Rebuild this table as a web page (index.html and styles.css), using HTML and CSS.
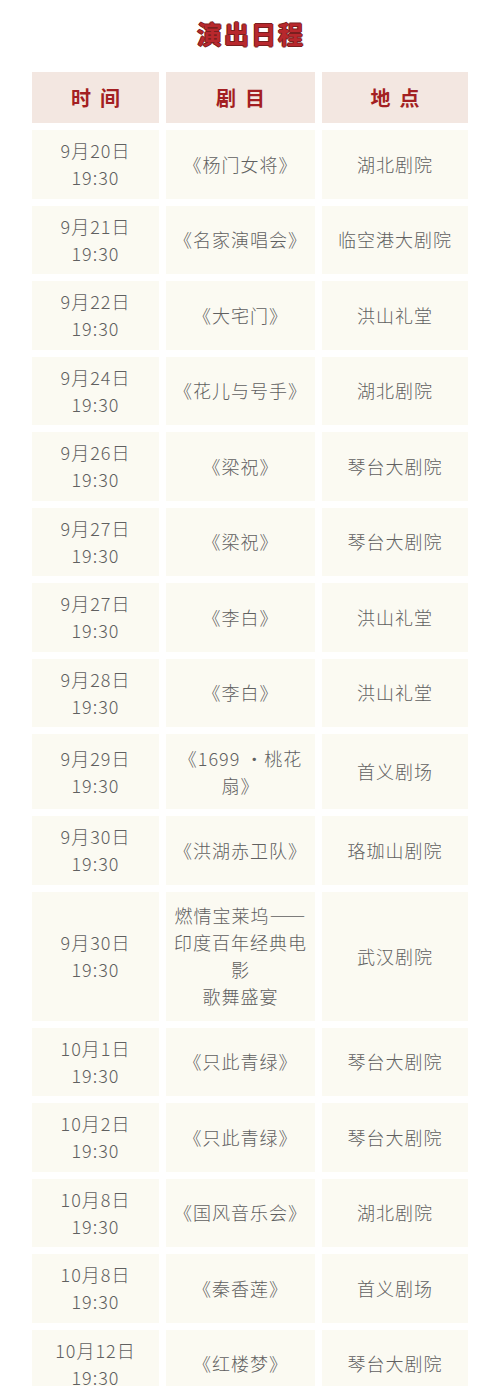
FILE: index.html
```html
<!DOCTYPE html>
<html lang="zh">
<head>
<meta charset="utf-8">
<title>演出日程</title>
<link rel="stylesheet" href="styles.css">
</head>
<body>
<h1 class="title">演出日程</h1>
<div class="schedule">
  <div class="head">时间</div>
  <div class="head">剧目</div>
  <div class="head">地点</div>

  <div class="cell">9月20日<br>19:30</div><div class="cell">《杨门女将》</div><div class="cell">湖北剧院</div>
  <div class="cell">9月21日<br>19:30</div><div class="cell">《名家演唱会》</div><div class="cell">临空港大剧院</div>
  <div class="cell">9月22日<br>19:30</div><div class="cell">《大宅门》</div><div class="cell">洪山礼堂</div>
  <div class="cell">9月24日<br>19:30</div><div class="cell">《花儿与号手》</div><div class="cell">湖北剧院</div>
  <div class="cell">9月26日<br>19:30</div><div class="cell">《梁祝》</div><div class="cell">琴台大剧院</div>
  <div class="cell">9月27日<br>19:30</div><div class="cell">《梁祝》</div><div class="cell">琴台大剧院</div>
  <div class="cell">9月27日<br>19:30</div><div class="cell">《李白》</div><div class="cell">洪山礼堂</div>
  <div class="cell">9月28日<br>19:30</div><div class="cell">《李白》</div><div class="cell">洪山礼堂</div>
  <div class="cell cell-tall">9月29日<br>19:30</div><div class="cell cell-tall">《1699 ·桃花<br>扇》</div><div class="cell cell-tall">首义剧场</div>
  <div class="cell">9月30日<br>19:30</div><div class="cell">《洪湖赤卫队》</div><div class="cell">珞珈山剧院</div>
  <div class="cell cell-tall">9月30日<br>19:30</div><div class="cell cell-tall">燃情宝莱坞——<br>印度百年经典电<br>影<br>歌舞盛宴</div><div class="cell cell-tall">武汉剧院</div>
  <div class="cell">10月1日<br>19:30</div><div class="cell">《只此青绿》</div><div class="cell">琴台大剧院</div>
  <div class="cell">10月2日<br>19:30</div><div class="cell">《只此青绿》</div><div class="cell">琴台大剧院</div>
  <div class="cell">10月8日<br>19:30</div><div class="cell">《国风音乐会》</div><div class="cell">湖北剧院</div>
  <div class="cell">10月8日<br>19:30</div><div class="cell">《秦香莲》</div><div class="cell">首义剧场</div>
  <div class="cell">10月12日<br>19:30</div><div class="cell">《红楼梦》</div><div class="cell">琴台大剧院</div>
</div>
</body>
</html>
```

FILE: styles.css
```css
html, body {
  margin: 0;
  padding: 0;
  background: #ffffff;
}

body {
  font-family: "Noto Sans CJK SC", "Noto Sans", sans-serif;
  width: 500px;
}

.title {
  margin: 0;
  padding-top: 20px;
  height: 27px;
  line-height: 27px;
  font-size: 25px;
  font-weight: 700;
  text-align: center;
  letter-spacing: 2px;
  padding-left: 2px;
  color: #b8282d;
  -webkit-text-stroke: 2px #ffffff;
  paint-order: stroke fill;
  text-shadow: 1px 0 0 #7a1f1f, -1px 0 0 #7a1f1f, 0 1px 0 #7a1f1f, 0 -1px 0 #7a1f1f;
  margin-bottom: 25px;
}

.schedule {
  margin-left: 32px;
  display: grid;
  grid-template-columns: 127px 149px 146px;
  column-gap: 7px;
  row-gap: 7px;
}

.head {
  height: 51px;
  background: #f3e7e1;
  color: #a31f22;
  font-size: 20px;
  font-weight: 700;
  letter-spacing: 9px;
  padding-left: 9px;
  display: flex;
  align-items: center;
  justify-content: center;
}

.cell {
  box-sizing: border-box;
  min-height: 68.5px;
  padding: 7px 0;
  background: #fbfaf2;
  color: #606060;
  font-size: 18px;
  font-weight: 300;
  line-height: 27px;
  letter-spacing: 1px;
  text-align: center;
  display: flex;
  align-items: center;
  justify-content: center;
}

.cell-tall {
  padding: 10.5px 0;
}
```
